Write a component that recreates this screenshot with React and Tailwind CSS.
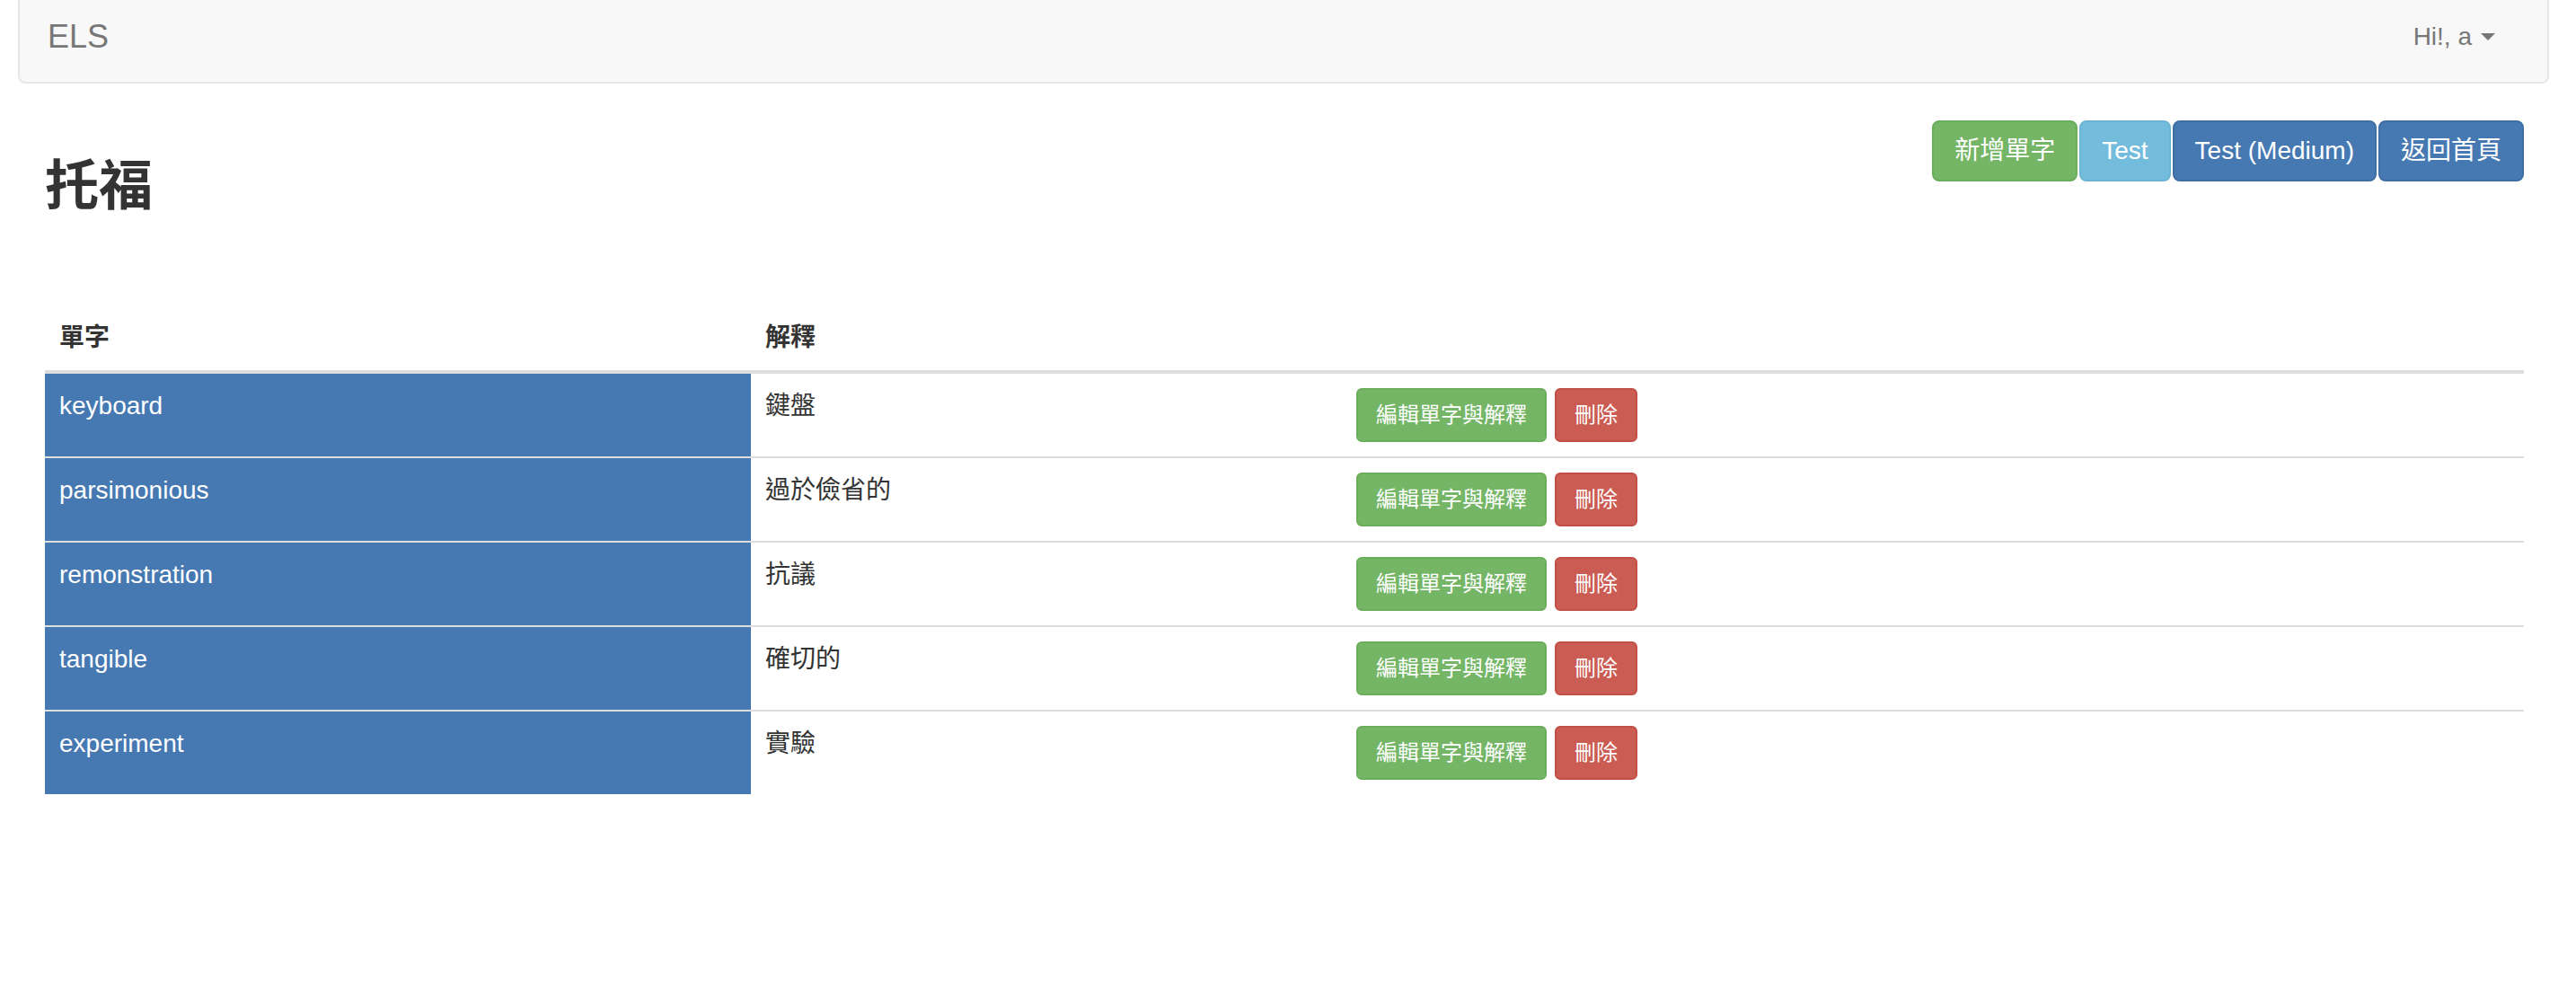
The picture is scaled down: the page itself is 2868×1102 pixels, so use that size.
const words = [
  { word: "keyboard", meaning: "鍵盤" },
  { word: "parsimonious", meaning: "過於儉省的" },
  { word: "remonstration", meaning: "抗議" },
  { word: "tangible", meaning: "確切的" },
  { word: "experiment", meaning: "實驗" },
];

const font = "font-['Liberation_Sans','Noto_Sans_CJK_TC',sans-serif]";

function Btn({ className, children }) {
  return (
    <button className={`h-[68px] px-[23px] text-[28px] leading-none text-white border-2 rounded-[8px] ${className}`}>
      {children}
    </button>
  );
}

export default function App() {
  return (
    <div className={`min-h-screen bg-white text-[#333] ${font}`}>

      {/* Navbar */}
      <nav className="ml-[20px] mr-[30px] h-[93px] bg-[#f8f8f8] border-2 border-t-0 border-[#e7e7e7] rounded-b-[8px] flex items-center justify-between pb-[10px] pl-[31px] pr-[58px]">
        <span className="text-[36px] text-[#777] leading-none">ELS</span>
        <span className="flex items-center gap-[10px] text-[28px] text-[#777] leading-none">
          Hi!, a
          <span className="w-0 h-0 border-x-[8px] border-x-transparent border-t-[8px] border-t-[#777]" />
        </span>
      </nav>

      {/* Content */}
      <div className="pl-[50px] pr-[58px]">
        <div className="flex items-start justify-between pt-[41px]">
          <h1 className="mt-[41px] text-[60px] font-bold leading-[66px] text-[#333]">托福</h1>
          <div className="flex gap-[2px]">
            <Btn className="bg-[#74b566] border-[#6aad5b]">新增單字</Btn>
            <Btn className="bg-[#74bcdb] border-[#6bb5d4]">Test</Btn>
            <Btn className="bg-[#4679b2] border-[#3e6ea4]">Test (Medium)</Btn>
            <Btn className="bg-[#4679b2] border-[#3e6ea4]">返回首頁</Btn>
          </div>
        </div>

        {/* Table */}
        <div className="mt-[99px] text-[28px]">
          <div className="flex border-b-4 border-[#ddd] font-bold leading-[40px]">
            <div className="w-[786px] p-[16px]">單字</div>
            <div className="w-[658px] p-[16px]">解釋</div>
            <div className="flex-1 p-[16px]" />
          </div>
          {words.map((w, i) => (
            <div key={w.word} className={`flex ${i > 0 ? "border-t-2 border-[#ddd]" : ""}`}>
              <div className="w-[786px] p-[16px] bg-[#4679b2] text-white leading-[40px]">{w.word}</div>
              <div className="w-[658px] p-[16px] leading-[40px] text-[#333]">{w.meaning}</div>
              <div className="flex-1 p-[16px] flex gap-[9px]">
                <button className="h-[60px] px-[20px] text-[24px] leading-none text-white bg-[#74b566] border-2 border-[#6aad5b] rounded-[6px]">
                  編輯單字與解釋
                </button>
                <button className="h-[60px] px-[20px] text-[24px] leading-none text-white bg-[#cb5c53] border-2 border-[#c24f46] rounded-[6px]">
                  刪除
                </button>
              </div>
            </div>
          ))}
        </div>
      </div>
    </div>
  );
}
